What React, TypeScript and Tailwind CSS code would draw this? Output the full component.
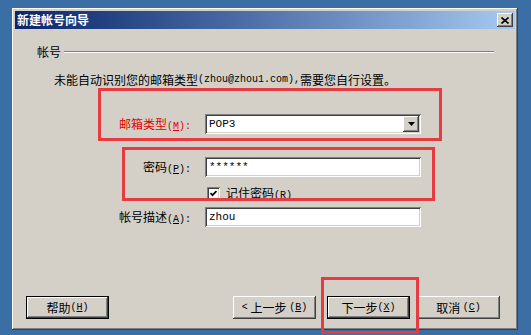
const cjk = "font-['Noto_Sans_CJK_SC',sans-serif]";
const raised =
  "bg-[#d4d0c8] shadow-[inset_-1px_-1px_#404040,inset_1px_1px_#ffffff,inset_-2px_-2px_#808080,inset_2px_2px_#d4d0c8]";
const sunken =
  "bg-white shadow-[inset_1px_1px_#808080,inset_-1px_-1px_#ffffff,inset_2px_2px_#404040,inset_-2px_-2px_#d4d0c8]";

function Latin({ children }: { children: React.ReactNode }) {
  return <span className="font-['Liberation_Mono',monospace] text-[10px] leading-none">{children}</span>;
}

function Key({ k }: { k: string }) {
  return (
    <Latin>
      (<span className="underline">{k}</span>)
    </Latin>
  );
}

function Field({ value, select }: { value: string; select?: boolean }) {
  return (
    <div className={`ml-[14px] w-[216px] h-[20px] shrink-0 flex items-center pl-[4px] pr-[2px] ${sunken}`}>
      <span className="flex-1 font-['Liberation_Mono',monospace] text-[11px] leading-none">{value}</span>
      {select && (
        <div className={`w-[16px] h-[16px] flex items-center justify-center ${raised}`}>
          <svg width="7" height="4" viewBox="0 0 7 4">
            <path d="M0 0h7L3.5 4z" fill="#000" />
          </svg>
        </div>
      )}
    </div>
  );
}

function Btn({ children, strong }: { children: React.ReactNode; strong?: boolean }) {
  return (
    <div
      className={`w-[83px] h-[23px] flex items-center justify-center text-[12px] leading-none text-black ${raised} ${
        strong ? "outline outline-1 outline-black -outline-offset-1 shadow-[inset_-2px_-2px_#404040,inset_2px_2px_#ffffff,inset_-3px_-3px_#808080]" : ""
      }`}
    >
      {children}
    </div>
  );
}

export default function App() {
  return (
    <div className={`w-[531px] h-[335px] bg-[#3a6ea5] pl-[12px] pt-[8px] overflow-hidden ${cjk}`}>
      <div className={`relative w-[506px] h-[322px] p-[3px] flex flex-col ${raised}`}>
        {/* title bar */}
        <div className="h-[18px] shrink-0 flex items-center justify-between bg-gradient-to-r from-[#0a246a] to-[#a6caf0]">
          <span className="pl-[2px] text-[12px] font-bold text-white leading-none">新建帐号向导</span>
          <div className={`mr-[2px] w-[16px] h-[14px] flex items-center justify-center ${raised}`}>
            <svg width="8" height="7" viewBox="0 0 8 7">
              <path d="M0.5 0.5L7.5 6.5M7.5 0.5L0.5 6.5" stroke="#000" strokeWidth="1.6" />
            </svg>
          </div>
        </div>

        <div className="flex-1 flex flex-col text-[12px] text-black leading-[14px]">
          {/* group header */}
          <div className="mt-[16px] h-[14px] ml-[22px] mr-[21px] flex items-center">
            <span>帐号</span>
            <div className="ml-[3px] flex-1 border-t border-t-[#808080] border-b border-b-white" />
          </div>

          <div className="mt-[14px] h-[14px] ml-[39px] flex items-center whitespace-nowrap">
            未能自动识别您的邮箱类型<Latin>(zhou@zhou1.com),</Latin>需要您自行设置。
          </div>

          <div className="mt-[27px] h-[20px] flex items-center">
            <div className="w-[176px] text-right text-[#e00000]">
              邮箱类型<Key k="M" />
              <Latin>:</Latin>
            </div>
            <Field value="POP3" select />
          </div>

          <div className="mt-[23px] h-[20px] flex items-center">
            <div className="w-[176px] text-right">
              密码<Key k="P" />
              <Latin>:</Latin>
            </div>
            <Field value="******" />
          </div>

          <div className="mt-[10px] h-[13px] ml-[192px] flex items-center">
            <div className={`w-[13px] h-[13px] shrink-0 flex items-center justify-center ${sunken}`}>
              <svg width="7" height="7" viewBox="0 0 7 7">
                <path d="M0.5 3L2.5 5.2L6.5 1" stroke="#000" strokeWidth="1.7" fill="none" />
              </svg>
            </div>
            <span className="ml-[6px]">
              记住密码<Key k="R" />
            </span>
          </div>

          <div className="mt-[7px] h-[20px] flex items-center">
            <div className="w-[176px] text-right">
              帐号描述<Key k="A" />
              <Latin>:</Latin>
            </div>
            <Field value="zhou" />
          </div>

          <div className="mt-auto mb-[8px] ml-[11px] flex items-center">
            <Btn strong>
              帮助<Key k="H" />
            </Btn>
            <div className="flex-1" />
            <Btn>
              <Latin>&lt;</Latin>&nbsp;上一步&nbsp;<Key k="B" />
            </Btn>
            <div className="w-[11px]" />
            <Btn strong>
              下一步<Key k="X" />
            </Btn>
            <div className="w-[7px]" />
            <Btn>
              取消&nbsp;<Key k="C" />
            </Btn>
            <div className="w-[15px]" />
          </div>
        </div>

        {/* annotation boxes */}
        <div className="absolute left-[86px] top-[80px] w-[344px] h-[53px] border-[3px] border-[#e63b40]" />
        <div className="absolute left-[110px] top-[139px] w-[313px] h-[54px] border-[3px] border-[#e63b40]" />
        <div className="absolute left-[309px] top-[269px] w-[98px] h-[57px] border-[3px] border-[#e63b40]" />
      </div>
    </div>
  );
}
